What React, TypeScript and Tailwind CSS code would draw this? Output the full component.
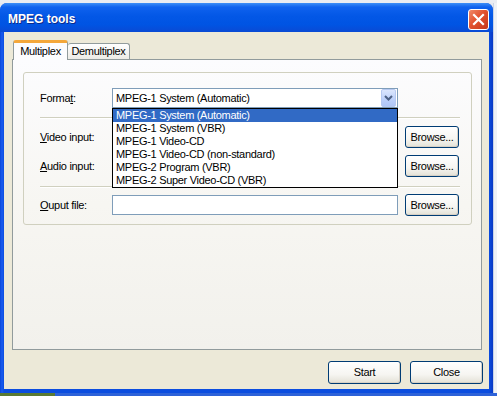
import React from 'react';

const formats = [
  'MPEG-1 System (Automatic)',
  'MPEG-1 System (VBR)',
  'MPEG-1 Video-CD',
  'MPEG-1 Video-CD (non-standard)',
  'MPEG-2 Program (VBR)',
  'MPEG-2 Super Video-CD (VBR)',
];

const XpButton: React.FC<{ label: string; className?: string }> = ({ label, className = '' }) => (
  <button
    type="button"
    className={`flex items-center justify-center rounded-[3px] border border-[#003C74] bg-[linear-gradient(180deg,#ffffff_0%,#f6f5f1_60%,#e3e1d6_100%)] text-[11px] text-black shadow-[inset_-1px_-1px_0_#d6d0c5] ${className}`}
  >
    {label}
  </button>
);

const Label: React.FC<{ before?: string; ul: string; after: string }> = ({ before = '', ul, after }) => (
  <span className="w-[72px] shrink-0 text-[11px] text-black">
    {before}
    <span className="underline underline-offset-[1px]">{ul}</span>
    {after}
  </span>
);

const Separator = () => (
  <div className="w-[420px] h-[2px] border-t border-[#D0D0BF] border-b border-b-white" />
);

export default function App() {
  return (
    <div className="w-[497px] h-[396px] overflow-hidden flex flex-col bg-[#E4E8F0] font-['Liberation_Sans',Arial,sans-serif] tracking-[-0.3px] select-none">
      <div className="h-[3px] shrink-0 bg-[#E9ECF2]" />
      <div className="flex flex-1">
        {/* window */}
        <div className="w-[493px] h-[390px] flex flex-col rounded-t-[7px] overflow-hidden bg-[linear-gradient(90deg,#0a47d8_0px,#1a5cf0_2px,#0b4ddf_4px,#0b4ddf_489px,#0838c4_493px)]">
          <div className="h-[29px] shrink-0 flex items-center pt-[3px] pl-[8px] pr-[4px] bg-[linear-gradient(180deg,#3d8ff7_0%,#0f62ee_14%,#0357e6_45%,#0054e3_75%,#0a4ad4_100%)]">
            <span className="text-[12px] font-bold text-white tracking-normal [text-shadow:1px_1px_#0b2a8a]">
              MPEG tools
            </span>
            <div className="ml-auto w-[21px] h-[21px] rounded-[3px] border border-white bg-[linear-gradient(135deg,#f08a6a_0%,#e2522f_45%,#c4381a_100%)] flex items-center justify-center">
              <svg width="13" height="13" viewBox="0 0 13 13">
                <path d="M2 2 L11 11 M11 2 L2 11" stroke="#ffffff" strokeWidth="2.2" strokeLinecap="square" />
              </svg>
            </div>
          </div>
          {/* client */}
          <div className="flex-1 mx-[4px] mb-[4px] bg-[#ECE9D8] pt-[8px] pl-[8px] flex flex-col">
            <div className="flex items-end h-[20px] ml-[1px] mb-[-1px] relative z-10 text-[11px]">
              <div className="w-[55px] h-[20px] rounded-t-[3px] border-x border-[#919B9C] border-t-[3px] border-t-[#F4A73A] bg-[#FCFCFE] flex items-center justify-center pb-[1px]">
                Multiplex
              </div>
              <div className="w-[62px] h-[16px] rounded-t-[3px] border border-b-0 border-[#919B9C] border-l-0 bg-[linear-gradient(180deg,#ffffff,#ecebe6)] flex items-center justify-center mb-[1px]">
                Demultiplex
              </div>
            </div>
            <div className="w-[470px] h-[291px] border border-[#919B9C] bg-[linear-gradient(180deg,#fcfcfe_0%,#f7f6f2_50%,#f2f1ec_100%)]">
              <div className="ml-[10px] mt-[12px] w-[449px] h-[153px] rounded-[3px] border border-[#D0D0BF] pl-[16px] pt-[15px] flex flex-col">
                {/* Format row */}
                <div className="flex items-center h-[20px] relative z-20">
                  <Label before="Forma" ul="t" after=":" />
                  <div className="relative w-[286px] h-[20px] border border-[#7F9DB9] bg-white flex items-center text-[11px]">
                    <span className="flex-1 pl-[3px]">MPEG-1 System (Automatic)</span>
                    <div className="w-[15px] h-[18px] mr-[1px] rounded-[2px] border border-[#B6C9F1] bg-[linear-gradient(180deg,#dbe6fd_0%,#bcd0fa_60%,#b0c6f6_100%)] flex items-center justify-center">
                      <svg width="9" height="6" viewBox="0 0 9 6">
                        <path d="M1 1 L4.5 4.5 L8 1" fill="none" stroke="#4D6185" strokeWidth="2" />
                      </svg>
                    </div>
                    <div className="absolute left-[-1px] top-[19px] w-[286px] border border-black bg-white">
                      {formats.map((f, i) => (
                        <div
                          key={f}
                          className={`h-[13px] leading-[13px] pl-[3px] text-[11px] ${i === 0 ? 'bg-[#316AC5] text-white' : 'text-black'}`}
                        >
                          {f}
                        </div>
                      ))}
                    </div>
                  </div>
                </div>
                <div className="mt-[9px]">
                  <Separator />
                </div>
                {/* Video */}
                <div className="flex items-center h-[22px] mt-[7px]">
                  <Label ul="V" after="ideo input:" />
                  <div className="w-[286px] h-[20px] border border-[#7F9DB9] bg-white" />
                  <XpButton label="Browse..." className="ml-[7px] w-[54px] h-[22px]" />
                </div>
                {/* Audio */}
                <div className="flex items-center h-[22px] mt-[7px]">
                  <Label ul="A" after="udio input:" />
                  <div className="w-[286px] h-[20px] border border-[#7F9DB9] bg-white" />
                  <XpButton label="Browse..." className="ml-[7px] w-[54px] h-[22px]" />
                </div>
                <div className="mt-[9px]">
                  <Separator />
                </div>
                {/* Output */}
                <div className="flex items-center h-[22px] mt-[6px]">
                  <Label ul="O" after="uput file:" />
                  <div className="w-[286px] h-[20px] border border-[#7F9DB9] bg-white" />
                  <XpButton label="Browse..." className="ml-[7px] w-[54px] h-[22px]" />
                </div>
              </div>
            </div>
            <div className="flex justify-end gap-[9px] mt-[11px] pr-[6px]">
              <XpButton label="Start" className="w-[73px] h-[23px]" />
              <XpButton label="Close" className="w-[73px] h-[23px]" />
            </div>
          </div>
        </div>
        <div className="flex-1 bg-[#EEF1F6] border-l border-[#c9d3e6]" />
      </div>
      <div className="h-[3px] shrink-0 flex">
        <div className="w-[55px] bg-[#5a7a34]" />
        <div className="flex-1 bg-[#2d62d8]" />
      </div>
    </div>
  );
}
